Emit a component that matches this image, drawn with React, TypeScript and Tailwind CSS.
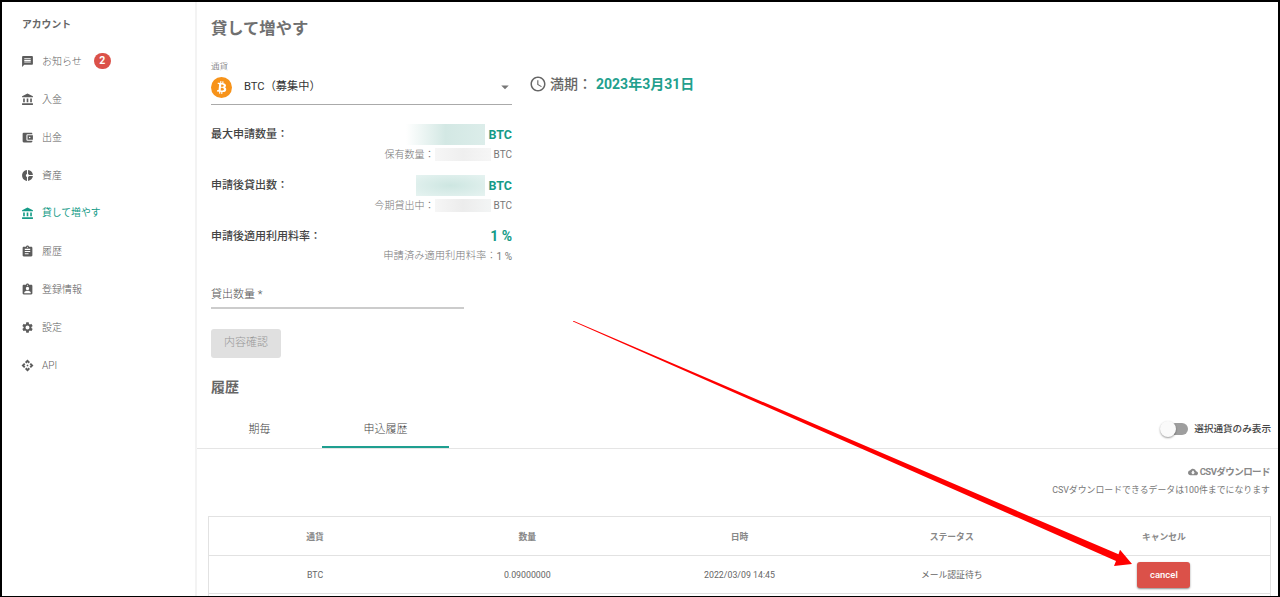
import React, { useState } from 'react';
import {
  MdMessage,
  MdAccountBalance,
  MdAccountBalanceWallet,
  MdDonutSmall,
  MdAssignment,
  MdAssignmentInd,
  MdSettings,
  MdApi,
  MdAccessTime,
  MdArrowDropDown,
  MdCloudDownload,
} from 'react-icons/md';

const menuItems = [
  { label: 'お知らせ', icon: MdMessage, badge: 2 },
  { label: '入金', icon: MdAccountBalance },
  { label: '出金', icon: MdAccountBalanceWallet },
  { label: '資産', icon: MdDonutSmall },
  { label: '貸して増やす', icon: MdAccountBalance, active: true },
  { label: '履歴', icon: MdAssignment },
  { label: '登録情報', icon: MdAssignmentInd },
  { label: '設定', icon: MdSettings },
  { label: 'API', icon: MdApi },
];

const headers = ['通貨', '数量', '日時', 'ステータス', 'キャンセル'];

const Sidebar: React.FC = () => (
  <aside className="w-[195px] shrink-0 border-r-2 border-[#f3f3f3] pl-[19px]">
    <h2 className="mt-[15px] h-[15px] pl-px text-[9.8px] leading-[15px] font-bold text-[#666]">アカウント</h2>
    <nav className="mt-[10px]">
      {menuItems.map(({ label, icon: Icon, badge, active }) => (
        <a
          key={label}
          className={`flex h-[38px] items-center text-[10px] ${active ? 'text-[#159b87]' : 'text-[#5c5c5c]'}`}
        >
          <Icon className="mr-[8px] h-[13px] w-[13px]" />
          <span className={active ? 'pt-px text-[9.8px] font-normal' : 'pt-px font-light'}>{label}</span>
          {badge && (
            <span className="ml-[12px] flex h-4 w-[17px] items-center justify-center rounded-full bg-[#db5149] text-[10.5px] font-bold text-white">
              {badge}
            </span>
          )}
        </a>
      ))}
    </nav>
  </aside>
);

const BitcoinIcon: React.FC = () => (
  <svg viewBox="0 0 32 32" className="h-[21px] w-[21px]">
    <circle cx="16" cy="16" r="16" fill="#f7931a" />
    <path
      fill="#fff"
      fillRule="evenodd"
      d="M23.2 14c.3-2.1-1.3-3.2-3.5-4l.7-2.8-1.7-.4-.7 2.7-1.4-.3.7-2.8-1.7-.4-.7 2.8-1.1-.3-2.4-.6-.4 1.9s1.2.3 1.2.3c.7.2.8.6.8 1l-1.9 7.7c-.1.2-.3.5-.8.4l-1.2-.3-.9 2 3.5.9-.7 2.9 1.7.4.7-2.8 1.4.3-.7 2.8 1.7.4.7-2.8c2.9.5 5.1.3 6-2.3.8-2.1 0-3.4-1.5-4.2 1.1-.3 1.9-1 2.2-2.5zm-3.9 5.5c-.5 2.1-4.1 1-5.2.7l.9-3.8c1.2.3 4.9.9 4.3 3.1zm.5-5.5c-.5 1.9-3.4.9-4.4.7l.9-3.4c1 .2 4 .7 3.5 2.7z"
      transform="rotate(-8 16 16)"
    />
  </svg>
);

export default function App() {
  const [onlySelected, setOnlySelected] = useState(false);

  return (
    <div className="relative flex h-[597px] w-[1280px] overflow-hidden border-2 border-b border-black bg-white font-['Roboto','Noto_Sans_CJK_JP',sans-serif] text-[#555]">
      <Sidebar />

      <main className="flex w-[1081px] flex-col">
        <section className="h-[375px] shrink-0 pl-[14px]">
          <h1 className="mt-[15px] h-6 text-[16.3px] leading-6 font-bold text-[#707070]">貸して増やす</h1>

          {/* Currency select + maturity date */}
          <div className="mt-[19px] flex h-[45px]">
            <div className="w-[301px] border-b border-[#aaa]">
              <div className="h-[13px] text-[8.5px] leading-[13px] font-light text-[#555]">通貨</div>
              <div className="mt-[3px] flex h-[22px] items-center">
                <BitcoinIcon />
                <span className="ml-[12px] text-[11.2px] text-[#333]">BTC（募集中）</span>
                <MdArrowDropDown className="mr-[-2px] ml-auto h-[18px] w-[18px] text-[#777]" />
              </div>
            </div>
            <div className="ml-[17px] flex h-[48px] items-center text-[14px]">
              <MdAccessTime className="mr-[3px] h-[18px] w-[18px] text-[#666]" />
              <span className="font-medium text-[#666]">満期：</span>
              <span className="ml-[4px] font-bold text-[#229f8d]">2023年3月31日</span>
            </div>
          </div>

          <div className="mt-[18px] w-[301px]">
            <div className="h-[51px]">
              <div className="flex h-[22px] items-center justify-between">
                <span className="pt-[2px] text-[11px] font-medium text-[#444]">最大申請数量：</span>
                <div className="flex items-center">
                  <div className="mr-[3px] h-[21px] w-[79px] bg-linear-to-r from-white via-[#d3e8e4] via-50% to-[#dcedea]" />
                  <span className="pt-[2px] text-[12.5px] font-bold text-[#159b87]">BTC</span>
                </div>
              </div>
              <div className="flex h-[19px] items-center justify-end text-[10px] font-light text-[#777]">
                <span>保有数量：</span>
                <div className="mr-[3px] h-[13px] w-[56px] bg-linear-to-r from-[#f6f6f6] via-[#efefef] to-[#f6f6f6]" />
                <span className="font-normal">BTC</span>
              </div>
            </div>

            <div className="h-[51px]">
              <div className="flex h-[22px] items-center justify-between">
                <span className="pt-[2px] text-[11px] font-medium text-[#444]">申請後貸出数：</span>
                <div className="flex items-center">
                  <div className="mr-[3px] h-[21px] w-[69px] bg-radial from-[#cde6e1] to-[#e6f3f1]" />
                  <span className="pt-[2px] text-[12.5px] font-bold text-[#159b87]">BTC</span>
                </div>
              </div>
              <div className="flex h-[19px] items-center justify-end text-[10px] font-light text-[#777]">
                <span>今期貸出中：</span>
                <div className="mr-[3px] h-[13px] w-[56px] bg-linear-to-r from-[#f6f6f6] via-[#ececec] to-[#f3f5f5]" />
                <span className="font-normal">BTC</span>
              </div>
            </div>

            <div className="h-[51px]">
              <div className="flex h-[22px] items-center justify-between">
                <span className="pt-[2px] text-[11px] font-medium text-[#444]">申請後適用利用料率：</span>
                <span className="pt-px text-[14px] font-bold text-[#159b87]">1 %</span>
              </div>
              <div className="flex h-[18px] items-center justify-end text-[10.3px] font-light text-[#777]">
                <span>申請済み適用利用料率：</span>
                <span className="text-[10px] font-normal">1 %</span>
              </div>
            </div>
          </div>

          <div className="mt-[8px] h-[25px] w-[253px] border-b-2 border-[#ccc] text-[11px] leading-[21px] font-light text-[#555]">
            貸出数量 *
          </div>
          <button
            disabled
            className="mt-[20px] block h-[29px] w-[70px] rounded-[3px] bg-[#e0e0e0] text-[11px] font-light text-[#999]"
          >
            内容確認
          </button>
        </section>

        <h2 className="h-[32px] shrink-0 pl-[14px] text-[14px] leading-[21px] font-bold text-[#666]">履歴</h2>

        {/* Tabs */}
        <div className="flex h-[40px] shrink-0 items-stretch border-b border-[#e5e5e5] text-[11px]">
          <button className="w-[125px] pt-[4px] font-light text-[#444]">期毎</button>
          <button className="w-[127px] border-b-2 border-[#1f9f90] pt-[5px] font-light text-[#444]">申込履歴</button>
          <label className="mr-[7px] ml-auto flex items-center text-[9.6px] font-medium text-[#444]">
            <button
              onClick={() => setOnlySelected(!onlySelected)}
              className="relative mr-[6px] h-[12px] w-[26px] rounded-full bg-[#9e9e9e]"
            >
              <span
                className={`absolute top-[-2px] h-[16px] w-[16px] rounded-full bg-[#fafafa] shadow-[0_1px_2px_rgba(0,0,0,0.4)] ${
                  onlySelected ? 'right-[-2px]' : 'left-[-2px]'
                }`}
              />
            </button>
            <span className="pt-px">選択通貨のみ表示</span>
          </label>
        </div>

        <div className="mt-[14px] h-[53px] shrink-0 pr-[8px] text-right text-[#777]">
          <div className="flex h-[18px] items-center justify-end text-[9.5px] font-bold tracking-[-0.55px] text-[#888]">
            <MdCloudDownload className="mr-[2px] h-[10px] w-[10px]" />
            CSVダウンロード
          </div>
          <div className="text-[8.9px] leading-[18px]">CSVダウンロードできるデータは100件までになります</div>
        </div>

        {/* Application history */}
        <div className="mr-[7px] ml-[11px] h-[90px] shrink-0 border border-[#e2e2e2] text-center text-[8.8px]">
          <div className="grid h-[39px] grid-cols-5 items-center border-b border-[#e2e2e2] pt-[3px] font-bold text-[#888]">
            {headers.map((header) => (
              <div key={header}>{header}</div>
            ))}
          </div>
          <div className="grid h-[38px] grid-cols-5 items-center border-b border-[#e2e2e2] text-[#666]">
            <div className="pt-[2px]">BTC</div>
            <div className="pt-[2px]">0.09000000</div>
            <div className="pt-[2px]">2022/03/09 14:45</div>
            <div className="pt-[2px]">メール認証待ち</div>
            <div className="flex justify-center">
              <button className="h-[26px] w-[53px] rounded-[3px] bg-[#db5149] pt-px text-[9.5px] font-medium text-white shadow-[0_1px_2px_rgba(0,0,0,0.45)]">
                cancel
              </button>
            </div>
          </div>
        </div>
      </main>

      {/* Arrow pointing at the cancel button */}
      <svg
        viewBox="573 321 559 246"
        className="pointer-events-none absolute top-[319px] left-[571px] h-[246px] w-[559px]"
      >
        <path
          fill="#ff0000"
          d="M573 320.6 L1118.5 554.3 L1120 549.8 L1132 564 L1114 566 L1116 561 L573 321.4 Z"
        />
      </svg>
    </div>
  );
}
